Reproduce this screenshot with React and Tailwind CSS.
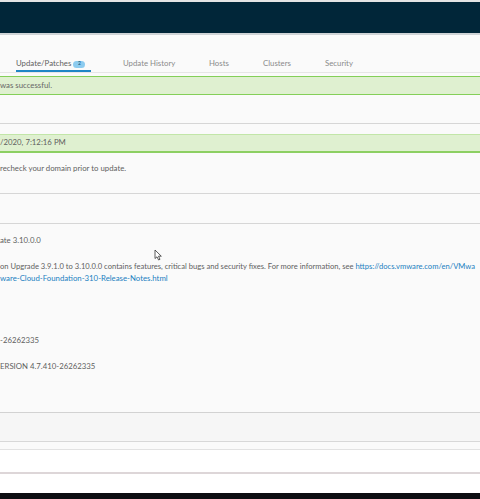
const tabs = [
  { label: 'Update History', w: 'w-[86px]' },
  { label: 'Hosts', w: 'w-[54px]' },
  { label: 'Clusters', w: 'w-[62px]' },
  { label: 'Security', w: 'w-[60px]' },
]

function Cursor() {
  return (
    <svg className="absolute left-[154px] top-[249px]" width="9" height="12" viewBox="0 0 9 12">
      <path d="M1 1 L1 9.5 L3 7.8 L4.6 11 L6 10.3 L4.5 7.2 L7.3 7.2 Z" fill="#fff" stroke="#333" strokeWidth="0.8" />
    </svg>
  )
}

export default function App() {
  return (
    <div className="relative w-[480px] h-[499px] overflow-hidden bg-[#fafafa] text-[7.8px] text-[#5f5f5f] flex flex-col" style={{ fontFamily: 'Lato, "Open Sans", sans-serif' }}>
      <div className="h-[2px] bg-[#e4e4e4]" />
      <div className="h-[31px] bg-[#012639]" />
      <div className="h-[2px] bg-[#cfd3d6]" />

      {/* tabs */}
      <div className="h-[38px] flex items-end border-b border-[#e6e6e6]">
        <div className="ml-[16px] w-[107px]">
          <div className="flex items-center h-[10px] border-b-[2px] border-[#1f86c6] pb-[1px] w-[75px] box-content">
            <span className="text-[#5f5f5f]">Update/Patches</span>
            <span className="ml-[2px] h-[7px] w-[12px] rounded-full bg-[#8ccbef] text-[5px] text-[#0b4a70] flex items-center justify-center">2</span>
          </div>
        </div>
        {tabs.map((t) => (
          <div key={t.label} className={`${t.w} h-[10px] pb-[3px] box-content flex items-center text-[#8a8a8a]`}>
            {t.label}
          </div>
        ))}
      </div>

      <div className="mt-[3px] h-[19px] bg-[#dff0d0] border-y border-[#84cf58] flex items-center text-[#666]">
        was successful.
      </div>

      <div className="h-[29px] border-b border-[#d6d6d6]" />

      <div className="mt-[10px] h-[19px] bg-[#dff0d0] border-t border-[#c2e6a8] border-b-2 border-b-[#8ccf62] flex items-center">
        /2020, 7:12:16 PM
      </div>

      <div className="h-[41px] border-b border-[#d6d6d6] pt-[10px]">recheck your domain prior to update.</div>

      <div className="h-[30px] border-b border-[#d6d6d6]" />

      <div className="flex-none h-[188px] pt-[11px]">
        <div>ate 3.10.0.0</div>
        <div className="mt-[14px] whitespace-nowrap text-[7.6px]">
          on Upgrade 3.9.1.0 to 3.10.0.0 contains features, critical bugs and security fixes. For more information, see{' '}
          <span className="text-[#1a7fc1]">https://docs.vmware.com/en/VMwa</span>
        </div>
        <div className="mt-[1px] text-[#1a7fc1]">ware-Cloud-Foundation-310-Release-Notes.html</div>
        <div className="mt-[50px]">-26262335</div>
        <div className="mt-[15px]">ERSION 4.7.410-26262335</div>
      </div>

      <div className="h-[30px] border-t border-[#d2d2d2] border-b border-b-[#d8d8d8] bg-[#f6f6f6]" />
      <div className="h-[8px] bg-[#fafafa] border-b border-[#e2e2e2]" />
      <div className="h-[24px] bg-white border-b-2 border-[#ddd6d8]" />
      <div className="flex-1 bg-white" />
      <div className="h-[6px] bg-[#0d0d12]" />

      <Cursor />
    </div>
  )
}
